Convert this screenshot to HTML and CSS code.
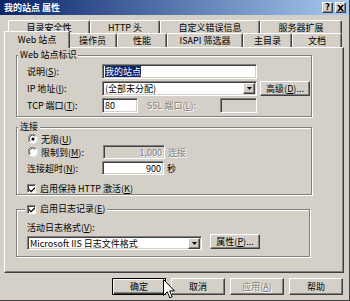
FILE: index.html
```html
<!DOCTYPE html>
<html lang="zh-CN">
<head>
<meta charset="utf-8">
<title>我的站点 属性</title>
<link rel="stylesheet" href="styles.css">
</head>
<body>
<div class="dialog">
  <div class="titlebar">
    <span class="title">我的站点 属性</span>
    <div class="caption-btns">
      <span class="cbtn">?</span>
      <span class="cbtn">
        <svg width="7" height="6" viewBox="0 0 7 6"><path d="M0 0h2l1.5 1.8L5 0h2L4.5 3 7 6H5L3.5 4.2 2 6H0l2.5-3z" fill="#000"/></svg>
      </span>
    </div>
  </div>

  <div class="tabs">
    <div class="tabrow back">
      <div class="tab t-dir">目录安全性</div>
      <div class="tab t-http">HTTP 头</div>
      <div class="tab t-err">自定义错误信息</div>
      <div class="tab t-ext">服务器扩展</div>
    </div>
    <div class="tabrow front">
      <div class="tab t-web active">Web 站点</div>
      <div class="tab t-op">操作员</div>
      <div class="tab t-perf">性能</div>
      <div class="tab t-isapi">ISAPI 筛选器</div>
      <div class="tab t-home">主目录</div>
      <div class="tab t-doc">文档</div>
    </div>
  </div>

  <div class="panel">
    <fieldset class="group g1">
      <legend>Web 站点标识</legend>
      <div class="g1-body">
        <div class="row">
          <span class="lbl">说明(<u>S</u>):</span>
          <div class="field f-desc"><span class="sel">我的站点</span></div>
        </div>
        <div class="row">
          <span class="lbl">IP 地址(<u>I</u>):</span>
          <div class="field combo f-ip">
            <span class="ctext">(全部未分配)</span>
            <span class="drop"><svg width="5" height="3" viewBox="0 0 5 3"><path d="M0 0h5L2.5 3z" fill="#000"/></svg></span>
          </div>
          <button class="btn b-adv">高级(<u>D</u>)...</button>
        </div>
        <div class="row">
          <span class="lbl">TCP 端口(<u>T</u>):</span>
          <div class="field f-port">80</div>
          <span class="dis ssl">SSL 端口(<u>L</u>):</span>
          <div class="field disabled f-ssl"></div>
        </div>
      </div>
    </fieldset>

    <fieldset class="group g2">
      <legend>连接</legend>
      <div class="g2-body">
        <div class="row r-unl">
          <span class="radio on"><svg width="10" height="10" viewBox="0 0 10 10"><circle cx="5" cy="5" r="4.5" fill="#fff"/><path d="M1.3 8A4.5 4.5 0 0 1 8 1.3" stroke="#808080" fill="none"/><path d="M2.2 7.2A3.5 3.5 0 0 1 7.2 2.2" stroke="#404040" fill="none"/><circle cx="5" cy="5" r="1.5" fill="#000"/></svg></span>
          <span>无限(<u>U</u>)</span>
        </div>
        <div class="row r-lim">
          <span class="radio"><svg width="10" height="10" viewBox="0 0 10 10"><circle cx="5" cy="5" r="4.5" fill="#fff"/><path d="M1.3 8A4.5 4.5 0 0 1 8 1.3" stroke="#808080" fill="none"/><path d="M2.2 7.2A3.5 3.5 0 0 1 7.2 2.2" stroke="#404040" fill="none"/></svg></span>
          <span class="lbl-r">限制到(<u>M</u>):</span>
          <div class="field disabled num f-lim"><span class="dis">1,000</span></div>
          <span class="dis unit">连接</span>
        </div>
        <div class="row r-to">
          <span class="lbl">连接超时(<u>N</u>):</span>
          <div class="field num f-to">900</div>
          <span class="unit">秒</span>
        </div>
        <div class="row r-keep">
          <span class="check"><svg width="7" height="7" viewBox="0 0 7 7"><path d="M0 2.5l2.5 2.5L7 0.5v2L2.5 7 0 4.5z" fill="#000"/></svg></span>
          <span>启用保持 HTTP 激活(<u>K</u>)</span>
        </div>
      </div>
    </fieldset>

    <fieldset class="group g3">
      <legend>
        <span class="check"><svg width="7" height="7" viewBox="0 0 7 7"><path d="M0 2.5l2.5 2.5L7 0.5v2L2.5 7 0 4.5z" fill="#000"/></svg></span>
        <span>启用日志记录(<u>E</u>)</span>
      </legend>
      <div class="g3-body">
        <div class="lbl-log">活动日志格式(<u>V</u>):</div>
        <div class="row r-log">
          <div class="field combo f-log">
            <span class="ctext">Microsoft IIS 日志文件格式</span>
            <span class="drop"><svg width="5" height="3" viewBox="0 0 5 3"><path d="M0 0h5L2.5 3z" fill="#000"/></svg></span>
          </div>
          <button class="btn b-prop">属性(<u>P</u>)...</button>
        </div>
      </div>
    </fieldset>
  </div>

  <div class="buttons">
    <button class="btn dbtn default">确定</button>
    <button class="btn dbtn">取消</button>
    <button class="btn dbtn"><span class="dis">应用(<u>A</u>)</span></button>
    <button class="btn dbtn">帮助</button>
  </div>

  <svg class="cursor" width="12" height="20" viewBox="0 0 12 20"><path d="M0.5 0.5V16.5L4.3 12.8 6.8 18.8 9.2 17.8 6.7 11.9H11.5z" fill="#fff" stroke="#000" stroke-linejoin="miter"/></svg>
</div>
</body>
</html>
```

FILE: styles.css
```css
* { box-sizing: border-box; }
html, body { margin: 0; padding: 0; }
body {
  width: 350px;
  height: 301px;
  overflow: hidden;
  background: #d4d0c8;
  font: 9px/11px "Noto Sans CJK SC", "Noto Sans", sans-serif;
  color: #000;
}
u { text-decoration: underline; }

.dialog {
  position: relative;
  width: 350px;
  height: 301px;
  display: flex;
  flex-direction: column;
  border-right: 1px solid #404040;
  border-bottom: 1px solid #404040;
}

/* title bar */
.titlebar {
  flex: none;
  height: 15px;
  display: flex;
  align-items: center;
  justify-content: space-between;
  padding: 0 3px 0 4px;
  background: linear-gradient(to right, #0a246a, #a6caf0);
  color: #fff;
  font-weight: bold;
  font-size: 9px;
}
.caption-btns { display: flex; gap: 2px; }
.cbtn {
  width: 11px;
  height: 11px;
  background: #d4d0c8;
  border: 1px solid;
  border-color: #fff #404040 #404040 #fff;
  box-shadow: inset -1px -1px #808080;
  display: flex;
  align-items: center;
  justify-content: center;
  color: #000;
  font: bold 8px/1 "DejaVu Sans", sans-serif;
}

/* tabs */
.tabs { flex: none; padding-top: 5px; }
.tabrow { display: flex; }
.back { height: 13px; padding-left: 8px; }
.front { height: 14px; padding-left: 6px; }
.tab {
  flex: none;
  display: flex;
  align-items: center;
  justify-content: center;
  white-space: nowrap;
  background: #d4d0c8;
  border-top: 1px solid #fff;
  border-left: 1px solid #fff;
  border-right: 1px solid #404040;
  border-radius: 2px 2px 0 0;
  box-shadow: inset -1px 0 #808080;
}
.back .tab { height: 14px; }
.t-dir { width: 82px; }
.t-http { width: 70px; }
.t-err { width: 100px; }
.t-ext { width: 82px; }
.t-web { width: 62px; }
.t-op { width: 49px; }
.t-perf { width: 50px; }
.t-isapi { width: 76px; }
.t-home { width: 49px; }
.t-doc { width: 50px; }
.tab.active {
  width: 66px;
  margin: -2px -2px -1px -2px;
  height: 17px;
  z-index: 2;
  padding-bottom: 2px;
}

/* panel */
.panel {
  flex: none;
  margin-left: 4px;
  width: 340px;
  height: 226px;
  border: 1px solid;
  border-color: #fff #404040 #404040 #fff;
  box-shadow: inset -1px -1px #808080;
  padding: 1px 0 0 11px;
  display: flex;
  flex-direction: column;
  align-items: flex-start;
}

.group {
  margin: 0;
  padding: 0;
  min-width: 0;
  border: 1px solid #808080;
  box-shadow: inset 1px 1px #fff, 1px 1px #fff;
}
.group legend {
  margin-left: 1px;
  padding: 0 2px;
  line-height: 12px;
  background: #d4d0c8;
  white-space: nowrap;
}
.g1 { width: 296px; }
.g2 { width: 296px; margin-top: 4px; }
.g3 { width: 294px; margin-top: 8px; }
.g3 legend {
  margin-left: 8px;
  display: flex;
  align-items: center;
  gap: 4px;
}

.row { display: flex; align-items: center; white-space: nowrap; }

.g1-body {
  padding: 3px 0 3px 10px;
  display: flex;
  flex-direction: column;
  gap: 2px;
}
.g1-body .row { height: 15px; }
.lbl { width: 75px; flex: none; }

.field {
  flex: none;
  height: 15px;
  background: #fff;
  border: 1px solid;
  border-color: #808080 #fff #fff #808080;
  box-shadow: inset 1px 1px #404040, inset -1px -1px #d4d0c8;
  padding: 0 2px;
  display: flex;
  align-items: center;
  overflow: hidden;
}
.field.disabled { background: #d4d0c8; }
.field.num { justify-content: flex-end; }
.sel { background: #0a246a; color: #fff; }
.combo { padding-right: 1px; justify-content: space-between; }
.drop {
  width: 12px;
  height: 11px;
  background: #d4d0c8;
  border: 1px solid;
  border-color: #fff #404040 #404040 #fff;
  box-shadow: inset -1px -1px #808080;
  display: flex;
  align-items: center;
  justify-content: center;
}

.f-desc { width: 155px; }
.f-ip { width: 155px; }
.f-port { width: 36px; }
.f-ssl { width: 37px; }
.ssl { margin-left: 9px; width: 73px; }

.btn {
  font: inherit;
  color: #000;
  height: 15px;
  padding: 0;
  background: #d4d0c8;
  border: 1px solid;
  border-color: #fff #404040 #404040 #fff;
  box-shadow: inset -1px -1px #808080;
  display: flex;
  align-items: center;
  justify-content: center;
  white-space: nowrap;
}
.b-adv { width: 50px; margin-left: 3px; }

.dis { color: #808080; text-shadow: 1px 1px 0 #fff; }

/* connection group */
.g2-body { padding: 0 0 0 10px; display: flex; flex-direction: column; }
.r-unl { height: 12px; padding-left: 1px; }
.r-lim { height: 14px; padding-left: 1px; }
.r-to { height: 14px; margin-top: 2px; }
.r-keep { height: 11px; margin-top: 8px; }
.radio { width: 10px; height: 10px; display: flex; margin-right: 3px; }
.lbl-r { width: 62px; }
.f-lim, .f-to { width: 62px; height: 14px; }
.unit { margin-left: 3px; }

.check {
  flex: none;
  width: 9px;
  height: 9px;
  background: #fff;
  border: 1px solid;
  border-color: #808080 #fff #fff #808080;
  box-shadow: inset 1px 1px #404040;
  display: flex;
  align-items: center;
  justify-content: center;
  padding: 1px 0 0 1px;
}
.r-keep .check { margin-right: 4px; }

/* log group */
.g3-body { padding: 7px 0 6px 10px; }
.lbl-log { height: 12px; line-height: 12px; }
.r-log { align-items: flex-start; height: 16px; }
.f-log { width: 175px; height: 14px; margin-top: 2px; }
.b-prop { width: 50px; margin-left: 8px; }

/* bottom buttons */
.buttons {
  flex: none;
  display: flex;
  justify-content: flex-end;
  gap: 5px;
  padding: 5px 6px 0 0;
}
.dbtn { width: 54px; height: 17px; }
.dbtn.default {
  border-color: #000;
  box-shadow: inset 1px 1px #fff, inset -1px -1px #404040, inset -2px -2px #808080;
}

.cursor { position: absolute; left: 163px; top: 279px; }
```
